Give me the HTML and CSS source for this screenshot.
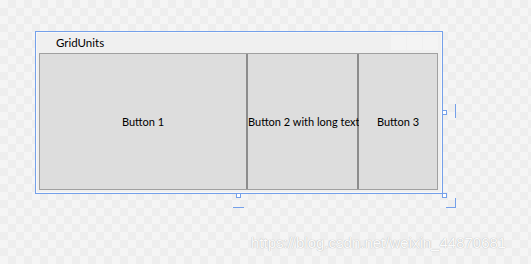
FILE: index.html
```html
<!DOCTYPE html>
<html lang="en">

<head>
    <meta charset="UTF-8">
    <meta name="viewport" content="width=device-width, initial-scale=1.0">
    <title>GridUnits</title>
    <link rel="stylesheet" href="styles.css">
</head>

<body>
    <div class="canvas">
        <div class="window">
            <div class="titlebar">
                <span class="title">GridUnits</span>
                <div class="caption-buttons">
                    <span class="caption-btn"></span>
                    <span class="caption-btn"></span>
                    <span class="caption-btn"></span>
                </div>
            </div>
            <div class="grid">
                <button class="cell">Button 1</button>
                <button class="cell">Button 2 with long text</button>
                <button class="cell">Button 3</button>
            </div>

            <span class="handle handle-right"></span>
            <span class="handle handle-bottom"></span>
            <span class="handle handle-corner"></span>
        </div>

        <span class="guide guide-right"></span>
        <span class="guide guide-bottom"></span>
        <span class="guide guide-corner"></span>

        <div class="watermark">https://blog.csdn.net/weixin_44870681</div>
    </div>
</body>

</html>
```

FILE: styles.css
```css
body {
    margin: 0;
    font-family: "Segoe UI", Lato, "Liberation Sans", sans-serif;
    color: #000;
}

.canvas {
    position: relative;
    width: 531px;
    height: 264px;
    padding: 31px 0 0 35px;
    box-sizing: border-box;
    background-color: #f5f5f5;
    background-image:
        linear-gradient(45deg, #eeeeee 25%, transparent 25%, transparent 75%, #eeeeee 75%),
        linear-gradient(45deg, #eeeeee 25%, transparent 25%, transparent 75%, #eeeeee 75%);
    background-size: 16px 16px;
    background-position: 0 0, 8px 8px;
    overflow: hidden;
}

.window {
    position: relative;
    width: 408px;
    height: 163px;
    box-sizing: border-box;
    border: 1px solid #74a0ea;
    box-shadow: inset 0 0 0 1px #f8f8f8;
    background-color: #f0f0f0;
    padding: 0 4px 3px 3px;
    display: flex;
    flex-direction: column;
}

.titlebar {
    height: 21px;
    display: flex;
    justify-content: space-between;
    align-items: flex-start;
}

.title {
    margin-left: 17px;
    margin-top: 4px;
    font-size: 11.5px;
    line-height: 14px;
}

.caption-buttons {
    display: flex;
    gap: 1px;
    margin-top: 3px;
}

.caption-btn {
    width: 15px;
    height: 15px;
    background-color: #f4f4f4;
}

.grid {
    flex: 1;
    display: grid;
    grid-template-columns: 206px 109px 78px;
    gap: 2px;
    border: 1px solid #a0a0a0;
    background-color: #8c8c8c;
}

.cell {
    border: none;
    margin: 0;
    padding: 0;
    background-color: #dddddd;
    font-family: inherit;
    font-size: 11px;
    color: #000;
    white-space: nowrap;
    overflow: visible;
}

.handle {
    position: absolute;
    width: 3px;
    height: 3px;
    border: 1px solid #74a0ea;
    background-color: #fff;
}

.handle-right {
    right: -5px;
    top: 78px;
}

.handle-bottom {
    left: 200px;
    bottom: -5px;
}

.handle-corner {
    right: -5px;
    bottom: -5px;
}

.guide {
    position: absolute;
    background-color: #74a0ea;
}

.guide-right {
    left: 455px;
    top: 104px;
    width: 1px;
    height: 14px;
}

.guide-bottom {
    left: 233px;
    top: 207px;
    width: 11px;
    height: 1px;
}

.guide-corner {
    left: 446px;
    top: 198px;
    width: 9px;
    height: 9px;
    background: none;
    border-right: 1px solid #74a0ea;
    border-bottom: 1px solid #74a0ea;
}

.watermark {
    position: absolute;
    left: 251px;
    top: 234px;
    font-family: "Liberation Sans", Arial, sans-serif;
    font-size: 15px;
    color: #fbfbfb;
    text-shadow: 0 0 1px #b8b8b8, 0 0 1px #c8c8c8;
    white-space: nowrap;
}
```
